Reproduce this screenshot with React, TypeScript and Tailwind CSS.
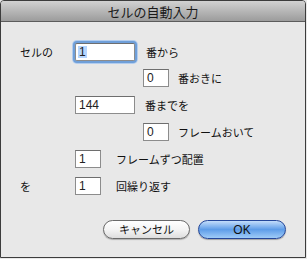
import React from 'react';

const jp = { fontFamily: '"Noto Sans CJK JP", "Noto Sans", sans-serif' };
const num = { fontFamily: '"Liberation Sans", Arial, sans-serif' };

function Field({ value, w, focused }: { value: string; w: string; focused?: boolean }) {
  return (
    <div
      className={`${w} h-[18px] bg-white border border-[#8c8c8c] border-t-[#6e6e6e] flex items-center pl-[2px] text-[12px] leading-none text-[#222] ${
        focused ? 'rounded-[2px] shadow-[0_0_0_2px_#6f9fd9,0_0_0_3px_#b3cdee]' : ''
      }`}
      style={num}
    >
      <span className={focused ? 'bg-[#b5d5ff] px-[1px]' : 'px-[1px]'}>{value}</span>
    </div>
  );
}

function Label({ children, className = '' }: { children: React.ReactNode; className?: string }) {
  return (
    <span className={`text-[11px] leading-none text-[#111] whitespace-nowrap ${className}`} style={jp}>
      {children}
    </span>
  );
}

export default function App() {
  return (
    <div className="w-[307px] h-[259px] bg-[#e8e8e8]">
      <div className="w-[306px] h-[258px] border border-[#3c3c3c] rounded-t-[4px] bg-[#e8e8e8] flex flex-col overflow-hidden">
        {/* title bar */}
        <div className="h-[21px] bg-gradient-to-b from-[#d2d2d2] to-[#9c9c9c] border-b border-[#5c5c5c] flex items-center justify-center">
          <span className="text-[13px] leading-none text-[#1a1a1a]" style={jp}>
            セルの自動入力
          </span>
        </div>

        <div className="flex flex-col pl-[19px] pt-[21px]">
          <div className="flex items-center h-[18px]">
            <Label className="w-[55px]">セルの</Label>
            <Field value="1" w="w-[60px]" focused />
            <Label className="ml-[11px]">番から</Label>
          </div>

          <div className="flex items-center h-[18px] mt-[8px]">
            <div className="w-[123px]" />
            <Field value="0" w="w-[26px]" />
            <Label className="ml-[9px]">番おきに</Label>
          </div>

          <div className="flex items-center h-[18px] mt-[9px]">
            <div className="w-[55px]" />
            <Field value="144" w="w-[60px]" />
            <Label className="ml-[10px]">番までを</Label>
          </div>

          <div className="flex items-center h-[18px] mt-[9px]">
            <div className="w-[123px]" />
            <Field value="0" w="w-[26px]" />
            <Label className="ml-[9px]">フレームおいて</Label>
          </div>

          <div className="flex items-center h-[18px] mt-[9px]">
            <div className="w-[55px]" />
            <Field value="1" w="w-[26px]" />
            <Label className="ml-[15px]">フレームずつ配置</Label>
          </div>

          <div className="flex items-center h-[18px] mt-[9px]">
            <Label className="w-[55px]">を</Label>
            <Field value="1" w="w-[26px]" />
            <Label className="ml-[15px]">回繰り返す</Label>
          </div>
        </div>

        <div className="flex justify-end gap-[8px] pr-[19px] mt-[25px]">
          <button
            className="w-[87px] h-[19px] rounded-full border border-[#6a6a6a] bg-gradient-to-b from-[#ffffff] via-[#f4f4f4] to-[#dedede] shadow-[0_1px_1px_rgba(0,0,0,0.25)] flex items-center justify-center text-[11px] leading-none text-[#111]"
            style={jp}
          >
            キャンセル
          </button>
          <button
            className="w-[88px] h-[19px] rounded-full border border-[#24479a] bg-gradient-to-b from-[#c3ddfa] via-[#5e9de8] to-[#9fccf7] shadow-[0_1px_1px_rgba(0,0,0,0.3)] flex items-center justify-center text-[12px] leading-none text-[#111]"
            style={num}
          >
            OK
          </button>
        </div>
      </div>
    </div>
  );
}
